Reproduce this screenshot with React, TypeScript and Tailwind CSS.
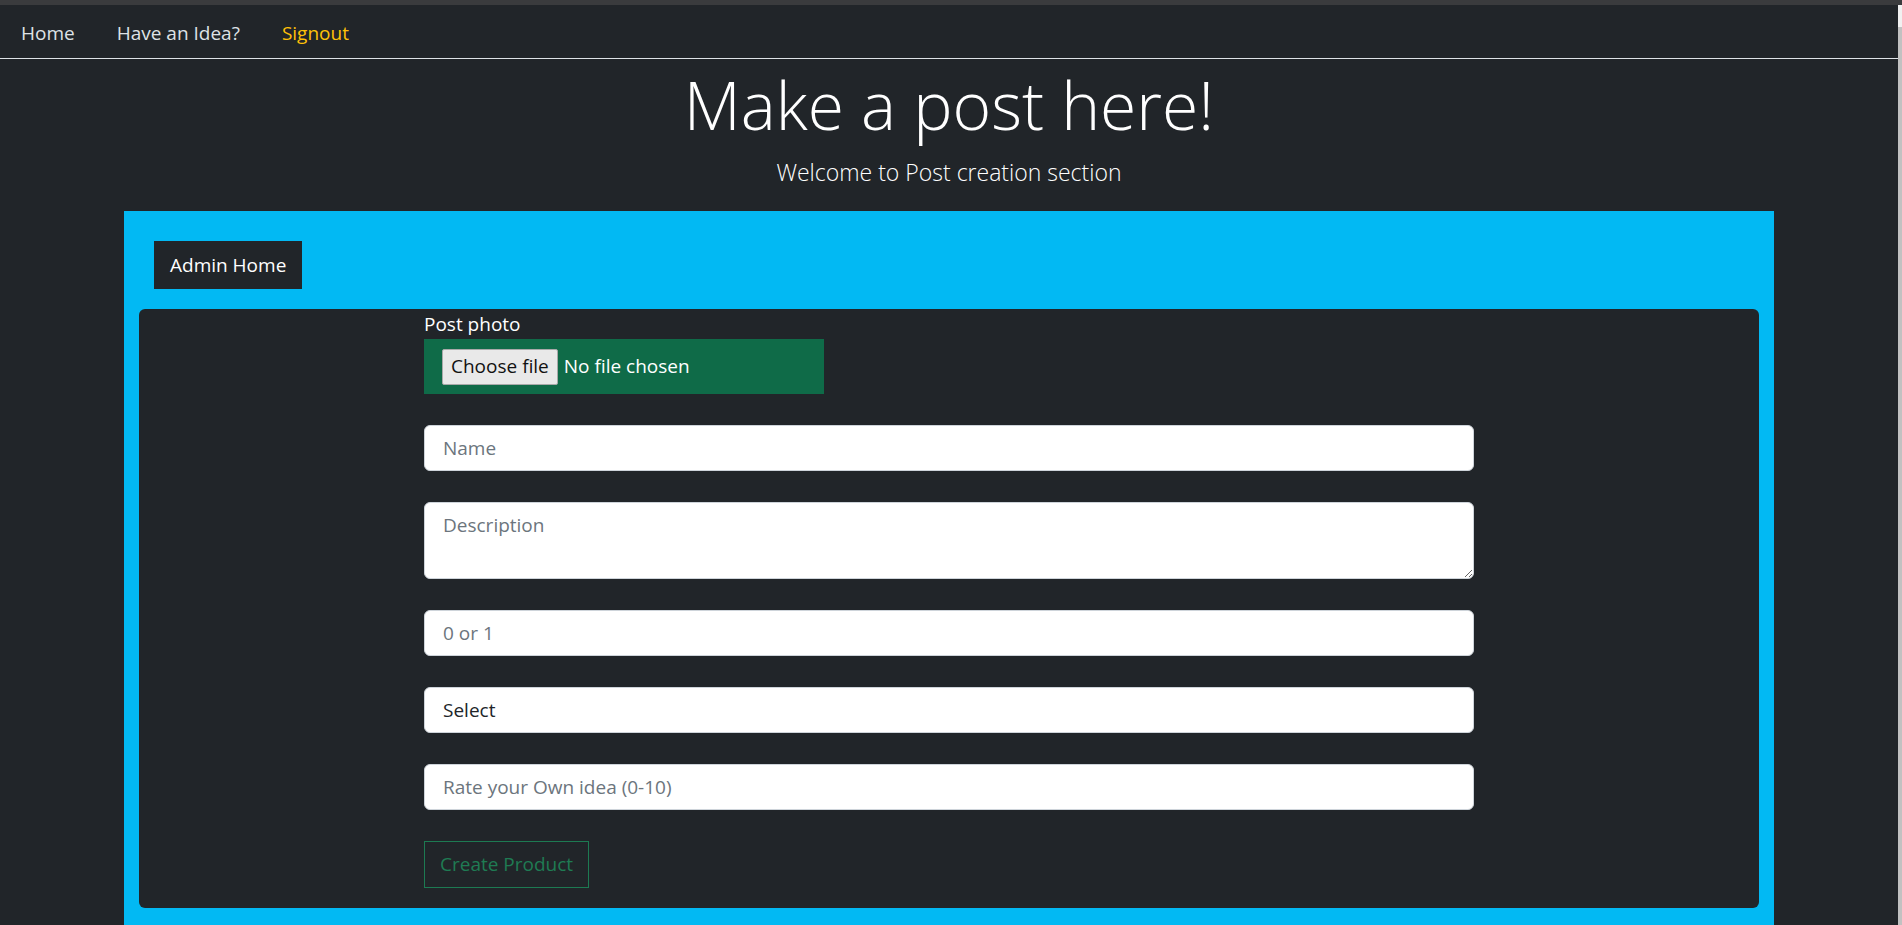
import React from "react";

const inputClass =
    "block w-full h-[46px] rounded-[6px] border border-[#ced4da] bg-white px-[18px] text-[19px] text-[#212529] placeholder:text-[#6c757d] outline-none";

function NavBar() {
    return (
        <nav className="flex h-[54px] items-center border-b border-[#dee2e6] pt-[3px] text-[19px]">
            <a className="px-[21px] text-[#dee2e6]" href="#">Home</a>
            <a className="px-[21px] text-[#dee2e6]" href="#">Have an Idea?</a>
            <a className="px-[21px] text-[#ffc107]" href="#">Signout</a>
        </nav>
    );
}

function PostForm() {
    return (
        <form className="mx-auto w-[1050px] flex flex-col gap-[31px] pb-[20px]">
            <div>
                <label className="block text-[19px] leading-[30px] text-white">Post photo</label>
                <div className="flex h-[55px] w-[400px] items-center bg-[#0f6b48] px-[18px]">
                    <span className="flex h-[36px] items-center rounded-[2px] border border-[#a9a9a9] bg-[#e9e9e9] px-[8px] text-[19px] text-[#111]">
                        Choose file
                    </span>
                    <span className="ml-[6px] text-[19px] text-white">No file chosen</span>
                </div>
            </div>
            <input className={inputClass} placeholder="Name" />
            <textarea
                className="block w-full h-[77px] rounded-[6px] border border-[#ced4da] bg-white px-[18px] py-[8px] text-[19px] leading-[28px] text-[#212529] placeholder:text-[#6c757d] outline-none"
                placeholder="Description"
            />
            <input className={inputClass} placeholder="0 or 1" />
            <select className={inputClass + " appearance-none"} defaultValue="">
                <option value="">Select</option>
            </select>
            <input className={inputClass} placeholder="Rate your Own idea (0-10)" />
            <div>
                <button
                    type="button"
                    className="h-[47px] border border-[#1d7a52] px-[15px] text-[19px] text-[#1f7b53]"
                >
                    Create Product
                </button>
            </div>
        </form>
    );
}

export default function App() {
    return (
        <div className="flex min-h-screen flex-col bg-[#212529] font-['Open_Sans',sans-serif]">
            <div className="h-[5px] bg-[#3a3b3d]" />
            <div className="flex flex-1">
                <div className="flex flex-1 flex-col">
                    <NavBar />
                    <header className="text-center text-white">
                        <h1 className="mt-[6px] text-[66px] font-light leading-[1.2]">Make a post here!</h1>
                        <p className="mt-[12px] text-[23px] font-light leading-[33px]">Welcome to Post creation section</p>
                    </header>
                    <div className="mx-auto mt-[22px] w-[1650px] flex-1 bg-[#02b9f3] px-[15px] pt-[30px] pb-[30px]">
                        <button
                            type="button"
                            className="ml-[15px] h-[48px] bg-[#212529] px-[16px] text-[19px] text-white"
                        >
                            Admin Home
                        </button>
                        <div className="mt-[20px] rounded-[6px] bg-[#212529]">
                            <PostForm />
                        </div>
                    </div>
                </div>
                <div className="flex w-[4px] flex-col">
                    <div className="h-[22px] bg-[#f1f1f1]" />
                    <div className="flex-1 bg-[#c1c1c1]" />
                </div>
            </div>
        </div>
    );
}
